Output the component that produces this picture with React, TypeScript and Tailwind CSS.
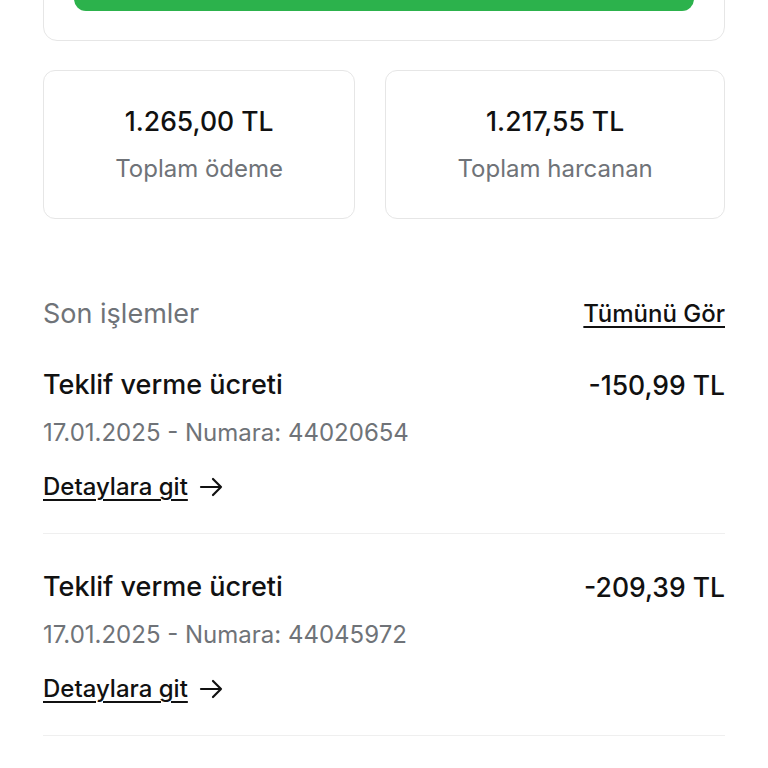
import React from "react";

const font = { fontFamily: "Inter, Roboto, 'Noto Sans', sans-serif" };

function Arrow() {
  return (
    <svg width="24" height="20" viewBox="0 0 24 20" fill="none" stroke="#111111" strokeWidth="2.2" strokeLinecap="round" strokeLinejoin="round">
      <path d="M2 10H22M14 2L22 10L14 18" />
    </svg>
  );
}

function Row({ amount, num }: { amount: string; num: string }) {
  return (
    <div className="border-b border-[#efefef] pb-[30px]">
      <div className="flex items-center justify-between leading-[32px]">
        <span className="text-[27px] font-medium text-[#111111]">Teklif verme ücreti</span>
        <span className="text-[26.5px] font-medium text-[#111111]">{amount}</span>
      </div>
      <div className="mt-[16px] text-[24px] leading-[32px] text-[#6f7378]">
        17.01.2025 - Numara: {num}
      </div>
      <div className="mt-[22px] flex items-center gap-[11px] leading-[32px]">
        <span className="text-[24px] font-medium text-[#111111] underline underline-offset-[4px] decoration-[1.5px]">
          Detaylara git
        </span>
        <Arrow />
      </div>
    </div>
  );
}

export default function App() {
  return (
    <div className="min-h-[768px] w-[768px] overflow-hidden bg-white px-[43px]" style={font}>
      <div className="-mt-[60px] rounded-[14px] border border-[#e6e6e6] px-[30px] pt-[13px] pb-[29px]">
        <div className="h-[57px] rounded-[12px] bg-[#2cb24c]" />
      </div>

      <div className="mt-[29px] flex gap-[30px]">
        <div className="flex-auto rounded-[12px] border border-[#e6e6e6] pt-[34px] pb-[33px] text-center">
          <div className="text-[26.5px] font-medium leading-[32px] text-[#111111]">1.265,00 TL</div>
          <div className="mt-[16px] text-[24px] leading-[32px] text-[#6f7378]">Toplam ödeme</div>
        </div>
        <div className="flex-auto rounded-[12px] border border-[#e6e6e6] pt-[34px] pb-[33px] text-center">
          <div className="text-[26.5px] font-medium leading-[32px] text-[#111111]">1.217,55 TL</div>
          <div className="mt-[16px] text-[24px] leading-[32px] text-[#6f7378]">Toplam harcanan</div>
        </div>
      </div>

      <div className="mt-[79px] flex items-center justify-between leading-[32px]">
        <span className="text-[27px] text-[#6f7378]">Son işlemler</span>
        <span className="text-[24px] font-medium text-[#111111] underline underline-offset-[4px] decoration-[1.5px]">
          Tümünü Gör
        </span>
      </div>

      <div className="mt-[39px]">
        <Row amount="-150,99 TL" num="44020654" />
        <div className="pt-[37px]">
          <Row amount="-209,39 TL" num="44045972" />
        </div>
      </div>
    </div>
  );
}
